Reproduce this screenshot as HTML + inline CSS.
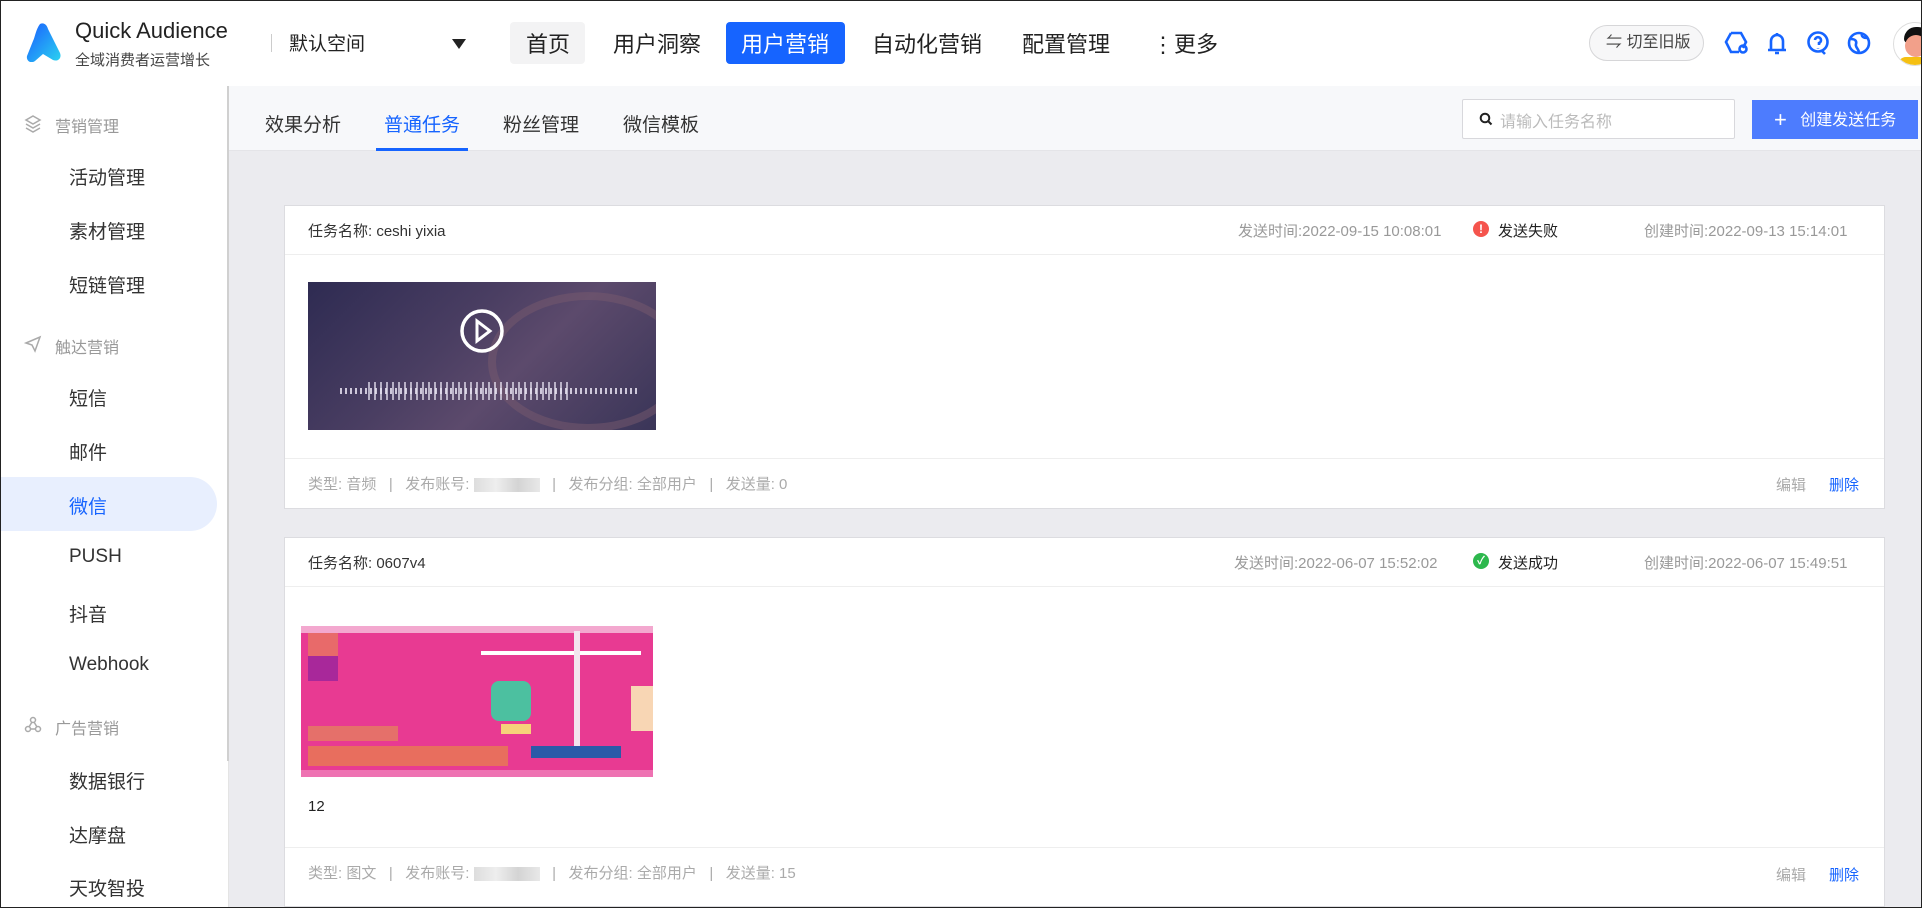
<!DOCTYPE html>
<html><head><meta charset="utf-8"><style>
*{margin:0;padding:0;box-sizing:border-box}
body{width:1922px;height:908px;overflow:hidden;position:relative;background:#ebebef;font-family:"Liberation Sans","Noto Sans CJK SC",sans-serif;color:#222}
.a{position:absolute;white-space:nowrap}
#frame{position:absolute;left:0;top:0;width:1922px;height:908px;border:1px solid #222;pointer-events:none;z-index:9}
.hdr{left:0;top:0;width:1922px;height:86px;background:#fff;box-shadow:0 1px 3px rgba(0,0,0,.06)}
.nav{font-size:22px;color:#222;top:27px}
.side{left:0;top:86px;width:229px;height:822px;background:#fff;border-right:1px solid #e4e4e4}
.si{font-size:19px;color:#333;left:69px}
.sg{font-size:16px;color:#999;left:55px}
.tabs{left:229px;top:86px;width:1693px;height:65px;background:#f7f8fa;border-bottom:1px solid #e4e4e8}
.tab{font-size:19px;color:#333;top:110px}
.card{background:#fff;border:1px solid #dcdce0}
.g{color:#999;font-size:15px}
.f{color:#aaa;font-size:15px}
.blur{display:inline-block;width:66px;height:14px;background:linear-gradient(90deg,#ddd,#eee,#d4d4d4,#e8e8e8);vertical-align:middle}
</style></head><body>
<div class="a hdr"></div>
<svg class="a" style="left:24px;top:22px" width="38" height="40" viewBox="0 0 38 40"><defs><linearGradient id="lg" x1="0" y1="0" x2="1" y2="1"><stop offset="0" stop-color="#1a5cff"/><stop offset="1" stop-color="#2ad4f0"/></linearGradient></defs><path d="M16 2c4-2 7 1 8 5l12 24c2 5-2 9-7 7l-10-6-8 7c-4 3-9 0-8-5l6-15c2-4 3-12 7-17z" fill="url(#lg)"/></svg>
<div class="a" style="left:75px;top:18px;font-size:22px;color:#222">Quick Audience</div>
<div class="a" style="left:75px;top:49px;font-size:15px;color:#444">全域消费者运营增长</div>
<div class="a" style="left:271px;top:34px;width:1px;height:18px;background:#ccc"></div>
<div class="a" style="left:289px;top:29px;font-size:19px;color:#222">默认空间</div>
<div class="a" style="left:452px;top:39px;width:0;height:0;border-left:7px solid transparent;border-right:7px solid transparent;border-top:10px solid #222"></div>
<div class="a" style="left:510px;top:22px;width:75px;height:42px;background:#f3f3f4;border-radius:4px"></div>
<div class="a nav" style="left:526px">首页</div>
<div class="a nav" style="left:613px">用户洞察</div>
<div class="a" style="left:726px;top:22px;width:119px;height:42px;background:#1664ff;border-radius:4px"></div>
<div class="a nav" style="left:741px;color:#fff">用户营销</div>
<div class="a nav" style="left:872px">自动化营销</div>
<div class="a nav" style="left:1022px">配置管理</div>
<div class="a nav" style="left:1152px">⋮更多</div>
<div class="a" style="left:1589px;top:25px;width:115px;height:36px;border:1px solid #d6d6d8;border-radius:18px;background:#f7f7f8;font-size:16px;color:#444;line-height:34px;padding-left:16px">⇋ 切至旧版</div>
<svg class="a" style="left:1724px;top:30px" width="150" height="26" viewBox="0 0 150 26" fill="none" stroke="#1664ff" stroke-width="2.6">
<path d="M7 3h10l5 9-3 6M15 22H7L2 12 7 3"/><circle cx="19" cy="19" r="3.5"/>
<path d="M47 20V11a6 6 0 0 1 12 0v9zM44 20h18M51 23h4"/><path d="M53 3v2"/>
<circle cx="94" cy="12" r="9.5"/><path d="M91 10a3 3 0 1 1 4 3v2M94 18v.5"/><path d="M98 21l3 3"/>
<circle cx="135" cy="13" r="10"/><path d="M127 9c4 0 6 2 5 5s2 4 3 8M138 3c-1 4 2 5 5 5"/>
</svg>
<div class="a" style="left:1893px;top:22px;width:44px;height:44px;border-radius:50%;background:#fff;border:1px solid #ddd;overflow:hidden"><div style="position:absolute;left:10px;top:4px;width:26px;height:16px;background:#111;border-radius:12px 12px 4px 4px"></div><div style="position:absolute;left:11px;top:12px;width:22px;height:22px;background:#f2a08a;border-radius:50%"></div><div style="position:absolute;left:4px;top:34px;width:36px;height:14px;background:#f5c012;border-radius:8px 8px 0 0"></div></div>

<div class="a side"></div>
<div class="a" style="left:227px;top:86px;width:2px;height:675px;background:#d0d0d0"></div>
<svg class="a" style="left:24px;top:114px" width="18" height="20" viewBox="0 0 18 20" fill="none" stroke="#aaa" stroke-width="1.5"><path d="M9 2l7 4-7 4-7-4zM2 10l7 4 7-4M2 14l7 4 7-4"/></svg>
<div class="a sg" style="top:113px">营销管理</div>
<div class="a si" style="top:163px">活动管理</div>
<div class="a si" style="top:217px">素材管理</div>
<div class="a si" style="top:271px">短链管理</div>
<svg class="a" style="left:24px;top:335px" width="18" height="18" viewBox="0 0 18 18" fill="none" stroke="#aaa" stroke-width="1.5"><path d="M2 8l14-6-5 14-3-6z"/></svg>
<div class="a sg" style="top:334px">触达营销</div>
<div class="a si" style="top:384px">短信</div>
<div class="a si" style="top:438px">邮件</div>
<div class="a" style="left:0;top:477px;width:217px;height:54px;background:#e8effe;border-radius:0 27px 27px 0"></div>
<div class="a si" style="top:492px;color:#1664ff">微信</div>
<div class="a si" style="top:546px">PUSH</div>
<div class="a si" style="top:600px">抖音</div>
<div class="a si" style="top:654px">Webhook</div>
<svg class="a" style="left:24px;top:716px" width="18" height="18" viewBox="0 0 18 18" fill="none" stroke="#aaa" stroke-width="1.5"><circle cx="9" cy="4" r="2.5"/><circle cx="4" cy="13" r="2.5"/><circle cx="14" cy="13" r="2.5"/><path d="M8 6l-3 5M10 6l3 5M6.5 13h5"/></svg>
<div class="a sg" style="top:715px">广告营销</div>
<div class="a si" style="top:767px">数据银行</div>
<div class="a si" style="top:821px">达摩盘</div>
<div class="a si" style="top:874px">天攻智投</div>

<div class="a tabs"></div>
<div class="a tab" style="left:265px">效果分析</div>
<div class="a tab" style="left:384px;color:#1664ff">普通任务</div>
<div class="a" style="left:376px;top:148px;width:92px;height:3px;background:#1664ff"></div>
<div class="a tab" style="left:503px">粉丝管理</div>
<div class="a tab" style="left:623px">微信模板</div>
<div class="a" style="left:1462px;top:99px;width:273px;height:40px;background:#fff;border:1px solid #d8d8dc;border-radius:2px"></div>
<svg class="a" style="left:1479px;top:112px" width="14" height="14" viewBox="0 0 14 14" fill="none" stroke="#222" stroke-width="2"><circle cx="6" cy="6" r="4.3"/><path d="M9 9l3.5 3.5"/></svg>
<div class="a" style="left:1500px;top:108px;font-size:16px;color:#bbb">请输入任务名称</div>
<div class="a" style="left:1752px;top:100px;width:166px;height:39px;background:#4d7cfe;color:#fff;font-size:16px;line-height:39px;padding-left:22px"><span style="font-size:22px;vertical-align:-2px">+</span>&nbsp;&nbsp;&nbsp;创建发送任务</div>

<!-- card 1 -->
<div class="a card" style="left:284px;top:205px;width:1601px;height:304px"></div>
<div class="a" style="left:285px;top:254px;width:1599px;height:1px;background:#eee"></div>
<div class="a" style="left:308px;top:220px;font-size:15px;color:#333">任务名称: ceshi yixia</div>
<div class="a g" style="left:1238px;top:220px">发送时间:2022-09-15 10:08:01</div>
<div class="a" style="left:1473px;top:221px;width:16px;height:16px;border-radius:50%;background:#f5544d;color:#fff;font-size:12px;font-weight:bold;line-height:16px;text-align:center">!</div>
<div class="a" style="left:1498px;top:220px;font-size:15px;color:#222">发送失败</div>
<div class="a g" style="left:1644px;top:220px">创建时间:2022-09-13 15:14:01</div>
<div class="a" style="left:308px;top:282px;width:348px;height:148px;background:linear-gradient(135deg,#2e2b52 0%,#4a3e62 40%,#5c4a6c 60%,#3a3558 100%);overflow:hidden">
<div style="position:absolute;left:180px;top:10px;width:200px;height:140px;border-radius:50%;border:8px solid rgba(120,90,110,.5)"></div>
<div style="position:absolute;left:32px;top:106px;width:300px;height:6px;background:repeating-linear-gradient(90deg,rgba(230,225,240,.85) 0 2px,transparent 2px 5px)"></div>
<div style="position:absolute;left:60px;top:100px;width:200px;height:18px;background:repeating-linear-gradient(90deg,rgba(230,225,240,.7) 0 2px,transparent 2px 6px)"></div>
<svg style="position:absolute;left:151px;top:26px" width="46" height="46" viewBox="0 0 46 46" fill="none" stroke="#fff" stroke-width="3.5"><circle cx="23" cy="23" r="20"/><path d="M18 13v20l13-10z" stroke-width="3"/></svg></div>
<div class="a" style="left:285px;top:458px;width:1599px;height:1px;background:#eee"></div>
<div class="a f" style="left:308px;top:473px">类型: 音频 &nbsp; | &nbsp; 发布账号: <span class="blur"></span> &nbsp; | &nbsp; 发布分组: 全部用户 &nbsp; | &nbsp; 发送量: 0</div>
<div class="a f" style="left:1776px;top:474px">编辑</div>
<div class="a" style="left:1829px;top:474px;font-size:15px;color:#1664ff">删除</div>

<!-- card 2 -->
<div class="a card" style="left:284px;top:537px;width:1601px;height:370px"></div>
<div class="a" style="left:285px;top:586px;width:1599px;height:1px;background:#eee"></div>
<div class="a" style="left:308px;top:552px;font-size:15px;color:#333">任务名称: 0607v4</div>
<div class="a g" style="left:1234px;top:552px">发送时间:2022-06-07 15:52:02</div>
<div class="a" style="left:1473px;top:553px;width:16px;height:16px;border-radius:50%;background:#2db84d;color:#fff;font-size:11px;font-weight:bold;line-height:16px;text-align:center">✓</div>
<div class="a" style="left:1498px;top:552px;font-size:15px;color:#222">发送成功</div>
<div class="a g" style="left:1644px;top:552px">创建时间:2022-06-07 15:49:51</div>
<div class="a" style="left:301px;top:626px;width:352px;height:151px;background:#e83a92;overflow:hidden">
<div style="position:absolute;left:0;top:0;width:352px;height:7px;background:#f3a8cf"></div>
<div style="position:absolute;left:0;top:144px;width:352px;height:7px;background:#ee72b2"></div>
<div style="position:absolute;left:7px;top:7px;width:30px;height:30px;background:#e86a6a"></div>
<div style="position:absolute;left:7px;top:30px;width:30px;height:25px;background:#a8289a"></div>
<div style="position:absolute;left:7px;top:100px;width:90px;height:15px;background:#e5706a"></div>
<div style="position:absolute;left:7px;top:120px;width:200px;height:20px;background:#e86e5e"></div>
<div style="position:absolute;left:180px;top:25px;width:160px;height:4px;background:#fff"></div>
<div style="position:absolute;left:273px;top:5px;width:6px;height:120px;background:#f3e4ee"></div>
<div style="position:absolute;left:190px;top:55px;width:40px;height:40px;background:#4cc0a0;border-radius:8px"></div>
<div style="position:absolute;left:200px;top:98px;width:30px;height:10px;background:#f6d27a"></div>
<div style="position:absolute;left:330px;top:60px;width:22px;height:45px;background:#f8d6b4"></div>
<div style="position:absolute;left:230px;top:120px;width:90px;height:12px;background:#2a5aa8"></div>
</div>
<div class="a" style="left:308px;top:798px;font-size:15px;color:#222">12</div>
<div class="a" style="left:285px;top:847px;width:1599px;height:1px;background:#eee"></div>
<div class="a f" style="left:308px;top:862px">类型: 图文 &nbsp; | &nbsp; 发布账号: <span class="blur"></span> &nbsp; | &nbsp; 发布分组: 全部用户 &nbsp; | &nbsp; 发送量: 15</div>
<div class="a f" style="left:1776px;top:864px">编辑</div>
<div class="a" style="left:1829px;top:864px;font-size:15px;color:#1664ff">删除</div>
<div id="frame"></div>
</body></html>
